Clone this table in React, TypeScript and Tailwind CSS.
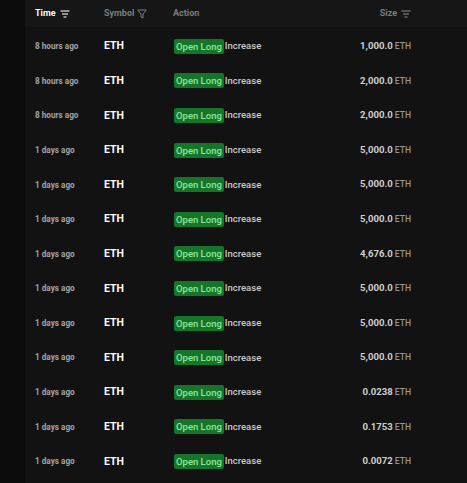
import React from "react";

const rows = [
  ["8 hours ago", "1,000.0"],
  ["8 hours ago", "2,000.0"],
  ["8 hours ago", "2,000.0"],
  ["1 days ago", "5,000.0"],
  ["1 days ago", "5,000.0"],
  ["1 days ago", "5,000.0"],
  ["1 days ago", "4,676.0"],
  ["1 days ago", "5,000.0"],
  ["1 days ago", "5,000.0"],
  ["1 days ago", "5,000.0"],
  ["1 days ago", "0.0238"],
  ["1 days ago", "0.1753"],
  ["1 days ago", "0.0072"],
];

function SortIcon({ color }: { color: string }) {
  return (
    <svg width="10" height="8" viewBox="0 0 10 8" className="ml-[4px]">
      <line x1="0.5" y1="1" x2="9.5" y2="1" stroke={color} strokeWidth="1.2" />
      <line x1="2" y1="4" x2="8" y2="4" stroke={color} strokeWidth="1.2" />
      <line x1="3.5" y1="7" x2="6.5" y2="7" stroke={color} strokeWidth="1.2" />
    </svg>
  );
}

function FunnelIcon() {
  return (
    <svg width="10" height="10" viewBox="0 0 10 10" className="ml-[3px]">
      <path d="M0.8 1 H9.2 L6 5 V9 L4 8 V5 Z" fill="none" stroke="#8a8a8a" strokeWidth="0.9" strokeLinejoin="round" />
    </svg>
  );
}

export default function App() {
  return (
    <div
      className="w-[467px] h-[483px] bg-[#0c0c0c] flex overflow-hidden"
      style={{ fontFamily: "Roboto, 'Liberation Sans', sans-serif" }}
    >
      <div className="w-[25px] shrink-0" />
      <div className="flex-1 bg-[#121212] flex flex-col">
        <div className="h-[27px] bg-[#161616] flex items-center text-[9px] font-bold shrink-0">
          <div className="w-[79px] pl-[10px] flex items-center text-white">
            Time
            <SortIcon color="#e5e5e5" />
          </div>
          <div className="w-[69px] flex items-center text-[#7c7c7c]">
            Symbol
            <FunnelIcon />
          </div>
          <div className="w-[100px] text-[#7c7c7c]">Action</div>
          <div className="w-[138px] flex items-center justify-end text-[#7c7c7c]">
            Size
            <SortIcon color="#7c7c7c" />
          </div>
        </div>
        <div className="h-[2px] shrink-0" />
        {rows.map(([t, s], i) => (
          <div key={i} className="h-[34.6px] flex items-center shrink-0">
            <div className="w-[79px] pl-[10px] text-[8.2px] font-bold text-[#a3a3a3]">{t}</div>
            <div className="w-[69px] text-[10.5px] font-bold text-white">ETH</div>
            <div className="w-[100px] flex items-center">
              <span className="bg-[#15752a] text-[#8ee89a] text-[9.5px] font-medium rounded-[2px] px-[2px] h-[15px] leading-[15px] ml-[1px]">
                Open Long
              </span>
              <span className="text-[9.5px] font-medium text-[#c8c8c8] ml-[1px]">Increase</span>
            </div>
            <div className="w-[138px] flex items-baseline justify-end">
              <span className="text-[9.6px] font-bold text-[#cfcfcf]">{s}</span>
              <span className="text-[8.6px] font-medium text-[#959595] ml-[2px]">ETH</span>
            </div>
          </div>
        ))}
      </div>
    </div>
  );
}
